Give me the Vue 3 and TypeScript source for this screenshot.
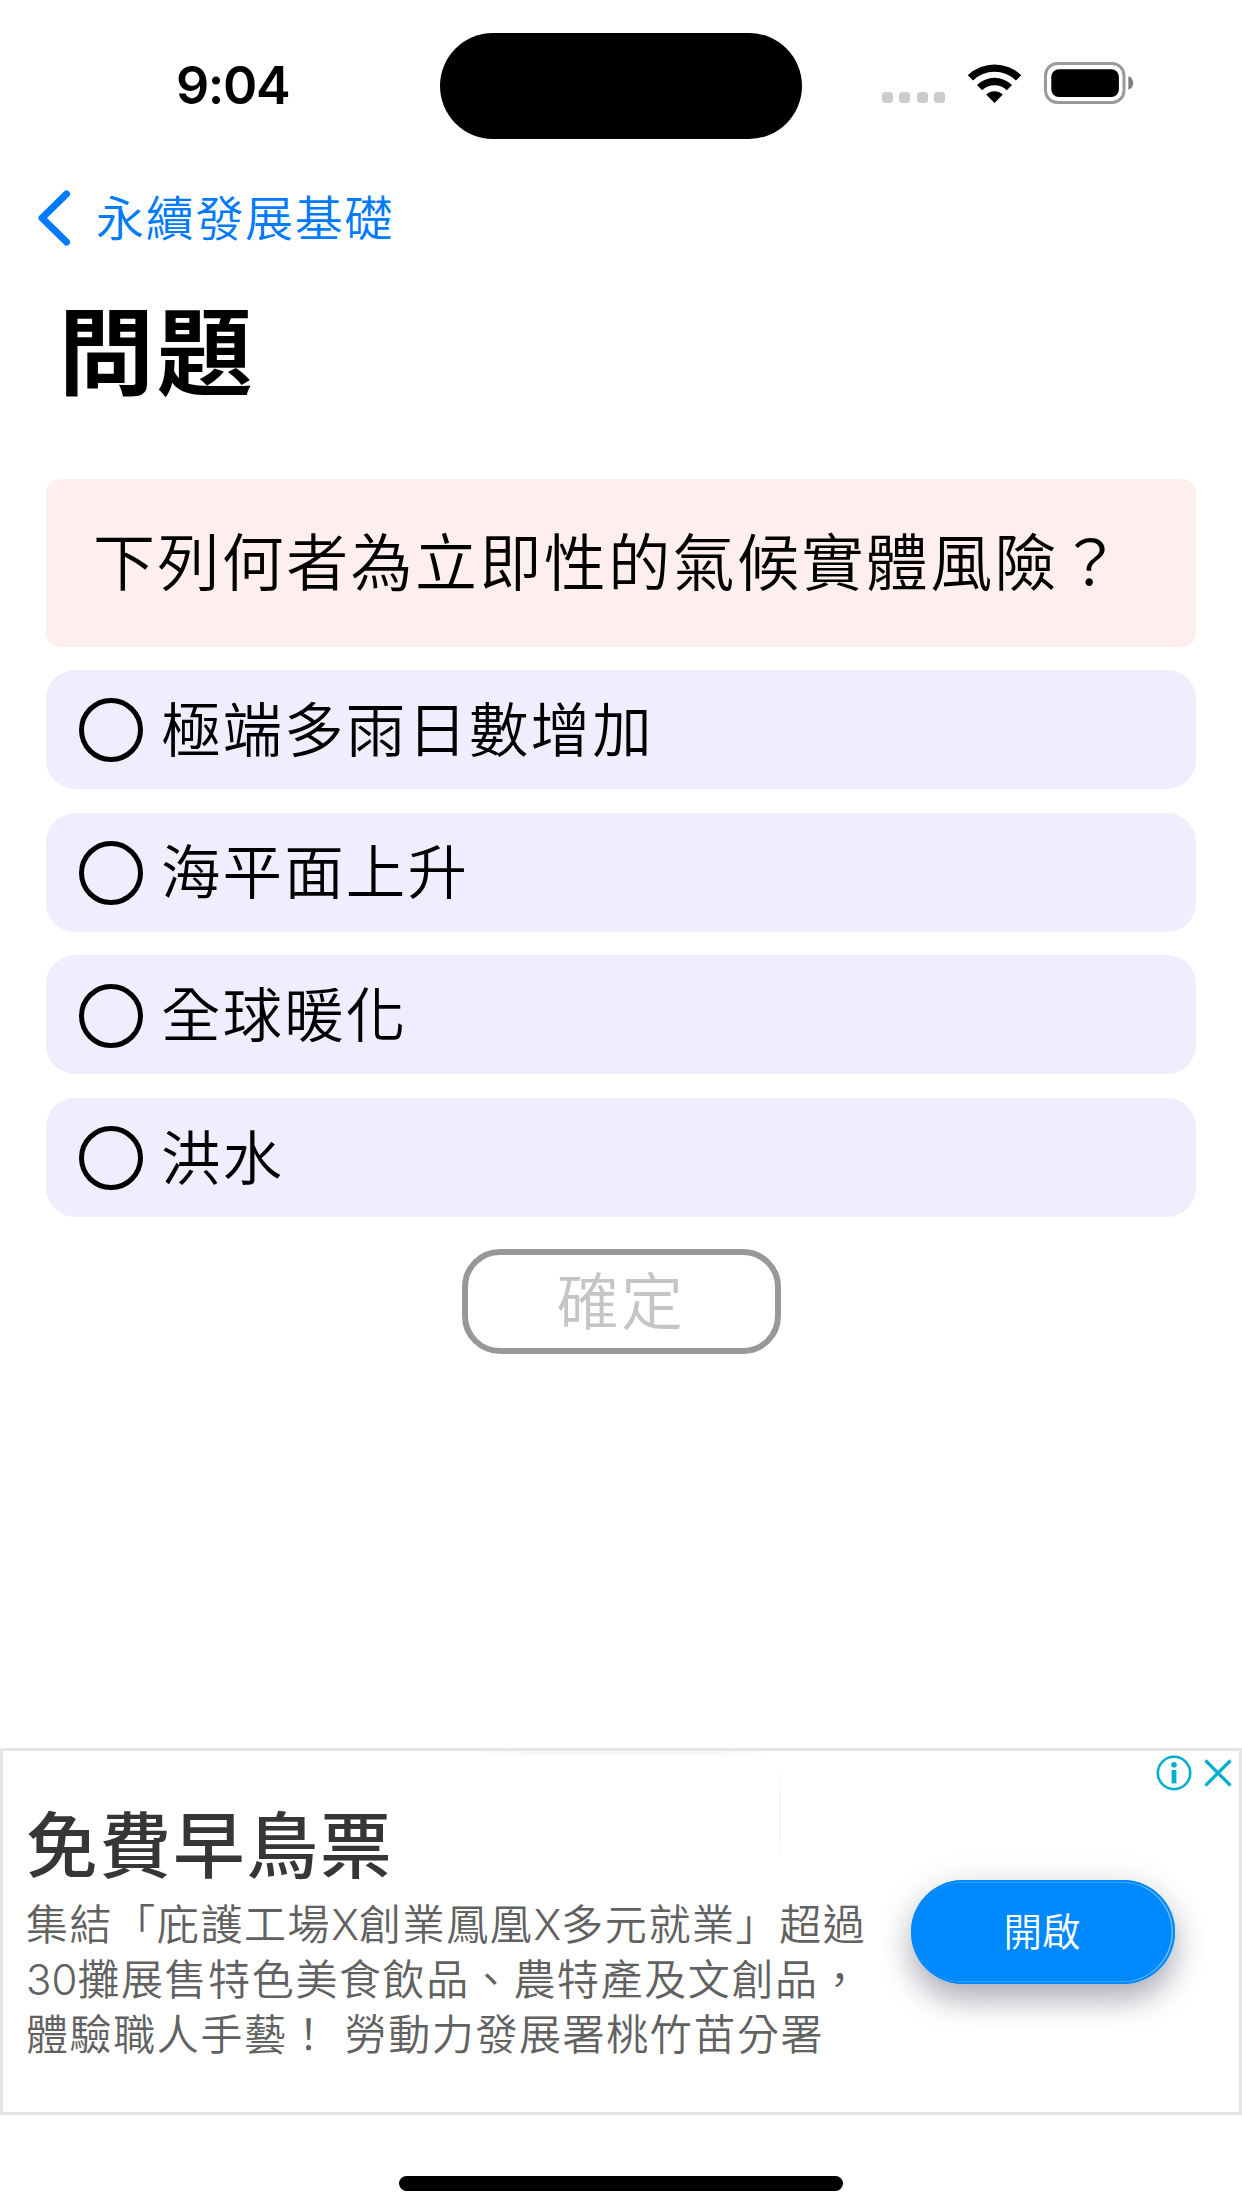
<script setup lang="ts">
import { ref } from 'vue'

interface Choice {
  id: number
  label: string
}

const question = '下列何者為立即性的氣候實體風險？'
const choices: Choice[] = [
  { id: 1, label: '極端多雨日數增加' },
  { id: 2, label: '海平面上升' },
  { id: 3, label: '全球暖化' },
  { id: 4, label: '洪水' },
]
// Latin runs are split out so they can be tracked tighter than the Han text.
const adLines: string[][] = [
  '集結「庇護工場X創業鳳凰X多元就業」超過',
  '30攤展售特色美食飲品、農特產及文創品，',
  '體驗職人手藝！ 勞動力發展署桃竹苗分署',
].map((line) => line.split(/([A-Z0-9]+)/).filter(Boolean))
const isLatin = (s: string): boolean => /^[A-Z0-9]/.test(s)
const selected = ref<number | null>(null)
</script>

<template>
  <div class="screen" lang="zh-Hant">
    <header class="status">
      <div class="time">9:04</div>
      <div class="island"></div>
      <div class="indicators">
        <div class="dots"><i v-for="n in 4" :key="n"></i></div>
        <svg class="wifi" viewBox="0.5 0 54 41" width="55" height="41">
          <path d="M0.8 12.2 A38.5 38.5 0 0 1 54.2 12.2 L49 17.6 A30.8 30.8 0 0 0 6 17.6 Z" />
          <path d="M10 21.9 A25.2 25.2 0 0 1 45 21.9 L39.8 27.3 A17.6 17.6 0 0 0 15.2 27.3 Z" />
          <path d="M19.2 31.5 A12 12 0 0 1 35.8 31.5 L27.5 40 Z" />
        </svg>
        <svg class="battery" viewBox="0 0 90 42" width="90" height="42">
          <rect x="1.5" y="1.5" width="78.5" height="39" rx="12" fill="none" stroke="#999" stroke-width="3" />
          <rect x="7.3" y="7.3" width="67.6" height="27.6" rx="7.5" />
          <path d="M84.3 14.2 C87.5 15.2 89.2 18 89.2 21 C89.2 24 87.5 26.8 84.3 27.8 Z" fill="#808080" />
        </svg>
      </div>
    </header>

    <nav class="back">
      <svg viewBox="0 0 34 56" width="34" height="56">
        <path d="M29.5 4 L5 28 L29.5 52" fill="none" stroke="#007aff" stroke-width="7" stroke-linecap="round" stroke-linejoin="round" />
      </svg>
      <span>永續發展基礎</span>
    </nav>

    <h1>問題</h1>

    <main class="quiz">
      <div class="question">{{ question }}</div>
      <div v-for="c in choices" :key="c.id" class="choice" @click="selected = c.id">
        <span class="radio"></span>
        <span>{{ c.label }}</span>
      </div>
      <button class="confirm" :disabled="selected === null">確定</button>
    </main>

    <section class="ad">
      <div class="copy">
        <h2>免費早鳥票</h2>
        <p v-for="(line, i) in adLines" :key="i"><span v-for="(part, j) in line" :key="j" :class="{ latin: isLatin(part) }">{{ part }}</span></p>
      </div>
      <button class="open">開啟</button>
      <div class="adchoices">
        <svg viewBox="0 0 36 36" width="36" height="36">
          <circle cx="18" cy="18" r="16.2" fill="none" stroke="#00aecd" stroke-width="2.6" />
          <circle cx="18" cy="9.8" r="2.8" fill="#00aecd" />
          <rect x="15.6" y="15" width="4.8" height="13.4" fill="#00aecd" />
        </svg>
        <svg viewBox="0 0 28 28" width="28" height="28">
          <path d="M1.5 1.5 L26.5 26.5 M26.5 1.5 L1.5 26.5" stroke="#00aecd" stroke-width="3.2" />
        </svg>
      </div>
    </section>

    <div class="home"></div>
  </div>
</template>

<style>
body {
  background: #fff;
}
</style>

<style scoped>
.screen {
  box-sizing: border-box;
  width: 1242px;
  height: 2208px;
  overflow: hidden;
  background: #fff;
  color: #000;
  display: flex;
  flex-direction: column;
  font-family: Inter, 'Noto Sans CJK TC', sans-serif;
  font-weight: 350;
}
h1,
h2,
p {
  margin: 0;
}
button {
  font: inherit;
  padding: 0;
}
.status {
  height: 106px;
  padding-top: 32.5px;
  display: flex;
}
.time {
  width: 264px;
  padding-left: 176px;
  line-height: 105px;
  font-size: 52px;
  font-weight: 600;
  letter-spacing: -1.4px;
}
.island {
  width: 362px;
  height: 106px;
  border-radius: 53px;
  background: #000;
}
.indicators {
  display: flex;
  margin-left: 80px;
}
.dots {
  display: flex;
  gap: 6.4px;
  margin-top: 59.5px;
}
.dots i {
  width: 11px;
  height: 11px;
  border-radius: 3.5px;
  background: #ccc;
}
.wifi {
  margin: 30px 0 0 21.6px;
}
.battery {
  margin: 29.5px 0 0 22.3px;
}
.back {
  display: flex;
  align-items: center;
  height: 60px;
  margin-top: 49.5px;
  padding-left: 37px;
  color: #007aff;
  font-size: 48px;
  letter-spacing: 1.7px;
  line-height: 60px;
}
.back span {
  margin-left: 25px;
  padding-top: 1px;
}
h1 {
  height: 100px;
  margin-top: 54.5px;
  padding-left: 58.5px;
  line-height: 100px;
  font-size: 95.5px;
  font-weight: 700;
  letter-spacing: 3px;
}
.quiz {
  display: flex;
  flex-direction: column;
  margin: 76px 46px 0;
}
.question {
  height: 168px;
  box-sizing: border-box;
  padding: 1px 0 0 47px;
  border-radius: 14px;
  background: #fee;
  font-size: 62px;
  letter-spacing: 2.4px;
  line-height: 168px;
  white-space: nowrap;
}
.choice {
  display: flex;
  align-items: center;
  box-sizing: border-box;
  height: 119px;
  margin-top: 23.6px;
  padding: 1.5px 0 0 33px;
  border-radius: 29px;
  background: #eef;
  font-size: 59.5px;
  letter-spacing: 2.1px;
  line-height: 119px;
}
.radio {
  box-sizing: border-box;
  width: 64px;
  height: 64px;
  margin-right: 18px;
  border: 5.5px solid #000;
  border-radius: 50%;
}
.confirm {
  box-sizing: border-box;
  align-self: center;
  width: 319px;
  height: 105px;
  margin-top: 32px;
  padding-top: 2px;
  border: 6px solid #989898;
  border-radius: 38px;
  background: #fff;
  color: #c5c5c7;
  font-size: 62px;
  letter-spacing: 2.4px;
  line-height: 92px;
}
.ad {
  position: relative;
  box-sizing: border-box;
  display: flex;
  flex: none;
  height: 367px;
  margin-top: auto;
  border: 3px solid #e4e6e8;
}
/* faint edges of the ad's inner panel */
.ad::before,
.ad::after {
  content: '';
  position: absolute;
}
.ad::before {
  left: 470px;
  top: 0;
  width: 297px;
  height: 4px;
  background: linear-gradient(90deg, transparent, #f7f7f7 20%, #f7f7f7 80%, transparent);
}
.ad::after {
  left: 776px;
  top: 14px;
  width: 2px;
  height: 94px;
  background: linear-gradient(transparent, #f7f7f7 30%, #f7f7f7 75%, transparent);
}
.copy {
  width: 908px;
  padding: 50px 0 0 23px;
  box-sizing: border-box;
  white-space: nowrap;
}
h2 {
  height: 90px;
  margin-bottom: 6px;
  color: #363636;
  font-size: 71.5px;
  font-weight: 500;
  letter-spacing: 2px;
  line-height: 90px;
}
p {
  height: 55px;
  color: #616161;
  font-size: 42px;
  letter-spacing: 1.6px;
  line-height: 55px;
}
.latin {
  letter-spacing: 0;
}
.open {
  width: 264px;
  height: 104px;
  margin-top: 128.5px;
  padding-right: 2px;
  border: 0;
  border-radius: 52px;
  background: #08f;
  box-shadow: inset 0 0 0 2px #08f, inset -1px 0 0 2.5px #6fbaff, 0 16px 30px rgba(40, 45, 65, 0.34), 0 4px 40px rgba(40, 45, 65, 0.08);
  color: #fff;
  font-size: 38.5px;
  line-height: 102px;
}
.adchoices {
  position: absolute;
  top: 3.5px;
  right: 7.5px;
  display: flex;
  align-items: center;
  gap: 11.5px;
}
.home {
  flex: none;
  width: 444px;
  height: 14.5px;
  margin: 61px auto 17.5px;
  border-radius: 8px;
  background: #000;
}
</style>
